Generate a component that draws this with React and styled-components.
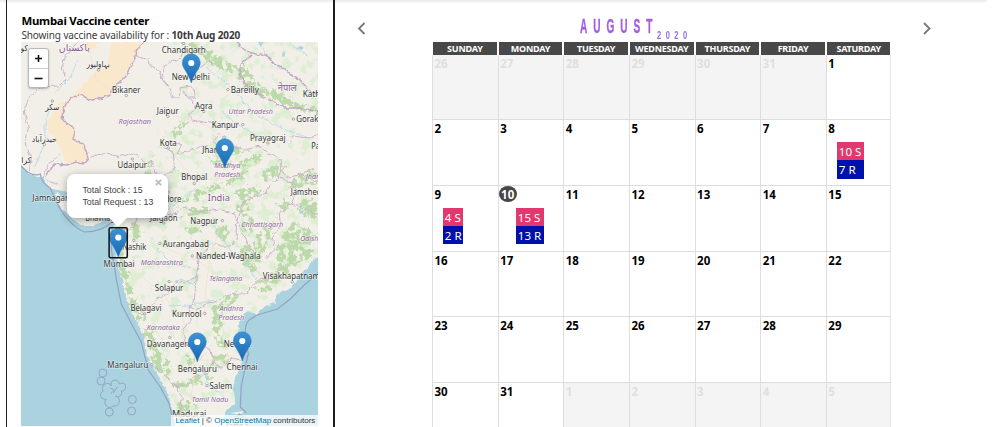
import React from "react";
import styled, { createGlobalStyle } from "styled-components";

const GlobalStyle = createGlobalStyle`
  * { box-sizing: border-box; }
  body { margin: 0; background: #fff; overflow: hidden; font-family: "Noto Sans", "Open Sans", sans-serif; }
`;

const Page = styled.div`
  width: 992px;
  height: 427px;
  overflow: hidden;
  display: flex;
  flex-direction: column;
`;
const TopEdge = styled.div`
  flex: none;
  height: 3px;
  width: 987px;
  background: linear-gradient(#ebebeb, #f3f3f3 50%, #fcfcfc);
  margin-bottom: -3px;
`;
const Columns = styled.div`
  flex: 1;
  min-height: 0;
  display: flex;
`;
const CenterPanel = styled.section`
  flex: none;
  width: 329px;
  margin-left: 6px;
  padding: 14px 0 0 14.4px;
  border-left: 1px solid #222;
  border-right: 2px solid #1c1c1c;
`;
const CenterTitle = styled.h1`
  margin: 0;
  font-size: 11.4px;
  line-height: 14px;
  font-weight: 700;
  letter-spacing: -0.25px;
  color: #000;
  white-space: nowrap;
`;
const Availability = styled.p`
  margin: 0;
  font-size: 10px;
  line-height: 14px;
  letter-spacing: -0.11px;
  color: #3a3a3a;
  white-space: nowrap;
`;
const MapFrame = styled.div`
  position: relative;
  width: 297px;
  height: 384px;
  overflow: hidden;
`;
const MapDrawing = styled.svg`
  display: block;
`;
const ZoomControl = styled.div`
  position: absolute;
  left: 7px;
  top: 6px;
  width: 21px;
  height: 40px;
  border: 1px solid #bab8b4;
  border-radius: 3px;
  background: #fff;
  display: grid;
  grid-template-rows: 1fr 1fr;
  box-shadow: 0 1px 2px rgba(0, 0, 0, 0.25);
`;
const ZoomButton = styled.button`
  border: 0;
  border-top: ${(p) => (p.$divided ? "1px solid #ccc" : "0")};
  padding: 0;
  background: none;
  display: grid;
  place-items: center;
`;
const Popup = styled.div`
  position: absolute;
  left: 46px;
  top: 132px;
  width: 101px;
  height: 44px;
  padding: 10px 0 0 15px;
  border-radius: 8px;
  background: #fff;
  box-shadow: 0 2px 8px rgba(0, 0, 0, 0.35);
  font: 8.8px/12px "Liberation Sans", sans-serif;
  color: #444;
  white-space: nowrap;
`;
const PopupTip = styled.svg`
  position: absolute;
  left: 41px;
  top: 43px;
`;
const PopupClose = styled.svg`
  position: absolute;
  right: 6px;
  top: 5px;
`;
const Attribution = styled.div`
  position: absolute;
  right: 0;
  bottom: 0;
  height: 11px;
  padding: 0 3px 0 4px;
  background: rgba(255, 255, 255, 0.75);
  font: 8.05px/11px "Liberation Sans", sans-serif;
  color: #333;
  white-space: nowrap;
  a { color: #0078a8; }
`;

const CalendarPanel = styled.main`
  flex: 1;
  display: flex;
  flex-direction: column;
`;
const MonthBar = styled.header`
  height: 42px;
  flex: none;
  display: flex;
  justify-content: space-between;
  padding: 21px 59px 0 21px;
`;
const ArrowIcon = styled.svg`
  flex: none;
`;
const MonthHeading = styled.h2`
  margin: -7px 0 0 1px;
  display: flex;
  width: 130px;
  height: 26px;
  font-family: "Liberation Sans", sans-serif;
  font-weight: 700;
`;
const MonthName = styled.span`
  width: 77px;
  font-size: 21px;
  line-height: 24px;
  letter-spacing: 12.4px;
  color: #a35de4;
  -webkit-text-stroke: 0.4px #a35de4;
  transform: scaleX(0.48);
  transform-origin: left center;
`;
const YearName = styled.span`
  font-size: 11px;
  line-height: 12px;
  margin-top: 15px;
  letter-spacing: 6.6px;
  color: #8f70dd;
  transform: scaleX(0.68);
  transform-origin: left center;
`;
const Grid = styled.div`
  flex: none;
  width: 460px;
  margin-left: 97px;
  display: grid;
  grid-template-columns: repeat(7, 65.65px);
  grid-template-rows: 12.6px repeat(6, 65.7px);
`;
const Weekday = styled.div`
  margin: 0 1px 0 1px;
  background: #484848;
  color: #fff;
  font-size: 9px;
  line-height: 13px;
  letter-spacing: -0.22px;
  font-weight: 700;
  text-align: center;
  white-space: nowrap;
`;
const Day = styled.div`
  border-left: 1.5px solid #dedee2;
  border-bottom: 1.5px solid #dcdce1;
  border-right: ${(p) => (p.$last ? "1px solid #e6e6e8" : "0")};
  background: ${(p) => (p.$outside ? "#f4f4f4" : "#fff")};
  color: ${(p) => (p.$outside ? "#dfdfdf" : "#000")};
`;
const DayNumber = styled.div`
  width: 18px;
  height: 16px;
  padding-left: ${(p) => (p.$today ? "0" : "1.5px")};
  border-radius: 50%;
  background: ${(p) => (p.$today ? "#464646" : "transparent")};
  color: ${(p) => (p.$today ? "#fff" : "inherit")};
  text-align: ${(p) => (p.$today ? "center" : "left")};
  font-size: 11.5px;
  line-height: 17px;
  font-weight: 700;
`;
const Chips = styled.div`
  width: fit-content;
  margin: 6px 0 0 ${(p) => (p.$indent ? "17px" : "10px")};
`;
const Chip = styled.div`
  height: 18.2px;
  padding: 0 ${(p) => p.$pad}px;
  font-size: 11.6px;
  line-height: 19.5px;
  color: #fff;
  white-space: nowrap;
  background: ${(p) => (p.$kind === "stock" ? "#e0396f" : "#0010aa")};
`;

/* [text, centre x, baseline, width, kind] */
const CITY = "city", REGION = "region", NATION = "nation";
const LABELS = [
  ["کو", 24, 51, 7, CITY], ["پاکستان", 74, 51, 31, NATION], ["بہاولپور", 98, 67, 23, CITY],
  ["سکر", 52, 110, 14, CITY], ["حیدرآباد", 44, 142, 25, CITY], ["کرا", 26, 163, 10, CITY],
  ["नेपाल", 287, 91, 19, NATION],
  ["Chandigarh", 183.5, 52.5, 44, CITY], ["New Delhi", 190.5, 80, 38, CITY],
  ["Bikaner", 126, 92.5, 28.5, CITY], ["Bareilly", 244.5, 92.5, 28, CITY],
  ["Kathm", 315, 96.5, 25, CITY], ["Jaipur", 167.5, 113.5, 22, CITY],
  ["Agra", 203.5, 108.5, 17.5, CITY], ["Uttar Pradesh", 250.5, 114, 44.5, REGION],
  ["Rajasthan", 134.5, 124, 32.5, REGION], ["Kanpur", 225, 127.5, 27, CITY],
  ["Gorakhpur", 316, 122, 40, CITY], ["Prayagraj", 267.5, 140.5, 35.5, CITY],
  ["Kota", 168, 145.5, 17, CITY], ["Jhansi", 213, 153, 22, CITY],
  ["Udaipur", 132, 168, 29.5, CITY], ["Patna", 321, 149, 20, CITY],
  ["Madhya", 227, 168, 26, REGION], ["Pradesh", 227, 177, 26, REGION],
  ["Bhopal", 194, 180, 26, CITY], ["Jharkhand", 322, 179, 33, REGION],
  ["Jamshedpur", 312, 195, 43, CITY], ["India", 218.5, 201, 22, NATION],
  ["Indore", 169, 201.5, 24, CITY], ["Jamnagar", 50, 201, 36, CITY],
  ["Bhavnagar", 103, 221, 36, CITY], ["Jalgaon", 163.5, 221, 27.5, CITY],
  ["Nagpur", 204, 224, 28, CITY], ["Chhattisgarh", 262, 227, 42, REGION],
  ["Odisha", 311, 241, 22, REGION], ["Nashik", 134, 250, 24, CITY],
  ["Aurangabad", 185.5, 247, 46, CITY], ["Nanded-Waghala", 228, 259, 64.5, CITY],
  ["Mumbai", 118.8, 266.5, 31, CITY], ["Maharashtra", 161.5, 264.5, 42, REGION],
  ["Telangana", 225.5, 281, 33, REGION], ["Visakhapatnam", 291, 278.5, 57, CITY],
  ["Solapur", 168.8, 291, 28.5, CITY], ["Belagavi", 145.6, 310.5, 31, CITY],
  ["Kurnool", 186.5, 316.5, 29.5, CITY], ["Andhra", 231, 311, 23.5, REGION],
  ["Pradesh", 231, 320, 26, REGION], ["Karnataka", 163, 330, 33, REGION],
  ["Davanagere", 169, 346.5, 45, CITY], ["Nellore", 237, 346.5, 27, CITY],
  ["Mangaluru", 127.5, 367.5, 41, CITY], ["Bengaluru", 197, 372, 39, CITY],
  ["Chennai", 241.8, 370, 31, CITY], ["Salem", 220.5, 388.5, 22.5, CITY],
  ["Tamil Nadu", 209.8, 402, 36.5, REGION], ["Madurai", 189, 417, 34, CITY],
  ["Jaffna", 237, 429, 22, CITY],
];
const LABEL_STYLE = {
  city: { size: 8.4, fill: "#333", slant: "normal", weight: 400 },
  region: { size: 7.8, fill: "#8f669a", slant: "italic", weight: 400 },
  nation: { size: 9.6, fill: "#85598f", slant: "normal", weight: 400 },
};
const TOWNS = [
  [183.5, 43.5], [126, 95.5], [227.5, 89.5], [167.5, 116.5], [203.5, 111.5], [242.5, 124.5],
  [293, 119], [168, 148], [132, 159], [194, 183.5], [168, 192], [222, 220.5], [133.5, 240.5],
  [159.5, 243.5], [192, 256], [163.5, 223], [52, 101], [44, 144.5], [98, 70], [168.7, 281.5],
  [144.5, 314], [204.5, 313.5], [169.5, 337.5], [151.7, 364.7], [206.5, 385.5], [292, 282], [267.5, 143],
];
const PINS = [[191, 83], [224.5, 168], [118, 257.5], [197, 362], [242, 361]];

const WOODS = [
  "M178 42 L196 50 L215 62 L235 73 L247 90 L268 98 L285 106 L300 110 L318 116 L318 108 L296 101 L276 90 L262 88 L250 75 L240 68 L222 59 L205 48 L192 42Z",
  "M188 44 L200 56 L214 66 L228 72 L236 76 L226 66 L212 60Z",
  "M192 120 L182 128 L174 138 L170 132 L180 124Z",
  "M242 62 L260 88 L240 80Z",
  "M143 180 L149 176 L152 164 L156 156 L151 158 L146 168Z",
  "M176 206 L190 194 L212 186 L226 180 L240 172 L250 168 L244 176 L230 184 L214 192 L196 200Z",
  "M178 218 L192 208 L214 208 L206 214 L190 216Z",
  "M236 164 L252 154 L264 156 L256 164 L244 170Z",
  "M208 160 L220 150 L234 146 L250 150 L234 154 L216 164Z",
  "M233 192 L248 186 L262 192 L254 200 L240 200Z",
  "M262 172 L280 160 L286 168 L276 178 L266 182Z",
  "M286 188 L296 176 L306 170 L318 174 L318 184 L300 188Z",
  "M276 206 L284 198 L290 204 L284 212Z",
  "M234 206 L246 200 L250 210 L238 216Z",
  "M242 214 L254 218 L250 234 L240 232Z",
  "M256 240 L262 226 L272 222 L270 242 L260 256Z",
  "M240 248 L252 242 L262 258 L254 274 L244 266Z",
  "M276 246 L284 232 L294 222 L304 228 L316 234 L308 244 L314 254 L300 264 L286 272 L276 262Z",
  "M252 288 L266 276 L282 264 L296 262 L288 276 L274 286 L262 292Z",
  "M294 206 L304 196 L318 202 L318 216 L304 220Z",
  "M115 238 L121 238 L125 262 L131 284 L138 304 L146 318 L140 324 L131 312 L125 292 L120 272Z",
  "M141 330 L150 328 L158 350 L166 356 L171 366 L168 376 L156 372 L150 352Z",
  "M164 374 L178 382 L192 380 L202 372 L202 381 L188 388 L176 388Z",
  "M176 404 L188 400 L198 406 L190 412 L182 428 L177 416Z",
  "M212 306 L222 302 L232 294 L240 288 L233 304 L222 312 L220 334 L226 346 L219 348 L213 332Z",
  "M185 356 L192 354 L196 364 L188 366Z",
  "M210 356 L226 352 L230 362 L216 368Z",
  "M70 212 L78 205 L88 209 L80 216Z",
  "M136 220 L142 232 L134 242 L129 230Z",
  "M203 370 L213 380 L204 384Z",
  "M184 230 L196 226 L204 230 L190 234Z",
  "M212 232 L224 224 L230 233 L220 240Z",
];
const BORDERS = [
  "M143 42 L141 46 L136 50 L136 56 L130 66 L126 75 L121 80 L113 89 L110 95 L99 99 L90 100 L83 96 L78 95 L72 97 L66 103 L62 113 L62 118 L66 123 L73 127 L74 140 L83 143 L85 150 L88 158 L84 163 L76 162 L66 165 L54 164 L46 176",
];
const STATE_LINES = [
  "M77 42 L73 47 L65 55 L62 68 L66 80 L58 86 L40 87 L28 98 L24 112 L28 128 L25 144 L31 158 L28 174",
  "M136 57 L148 59 L150 66 L158 70 L163 81 L170 89 L171 97 L179 97 L180 88 L190 86 L194 90 L195 98 L187 98 L184 92",
  "M184 44 L181 57 L176 61 L172 60 L164 66 L161 80",
  "M190 98 L195 108 L188 114 L192 120 L209 123 L220 128",
  "M186 50 L192 57 L196 62 L194 72 L207 62 L213 64",
  "M218 133 L214 142 L219 148 L233 146 L245 150 L259 146 L268 154 L275 156 L280 160 L280 170 L288 178 L300 174 L314 168",
  "M174 170 L173 152 L164 148 L167 142 L180 144 L178 154 L190 151 L200 146 L207 146",
  "M174 170 L163 176 L155 174 L151 160 L146 165 L141 158 L132 153 L118 157 L107 153 L91 156",
  "M147 180 L144 188 L148 198 L146 207 L139 214 L134 225 L128 230 L122 229",
  "M147 207 L160 208 L172 216 L185 206 L193 212 L205 211 L219 209 L231 213 L236 211",
  "M281 169 L278 178 L270 185 L266 193 L250 199 L242 202 L239 216 L236 225 L236 239 L231 246",
  "M280 178 L294 184 L296 192 L290 204 L279 212 L280 226 L272 236 L274 250 L265 259",
  "M231 246 L222 246 L212 243 L199 258 L196 277 L185 283 L175 281 L173 290 L156 300 L145 313 L136 314",
  "M196 277 L194 300 L188 310 L191 320 L182 330 L186 346 L196 343 L210 350 L214 362",
  "M190 306 L197 310 L207 303 L214 302 L232 294 L245 294 L258 280 L272 278 L286 264",
  "M214 362 L206 374 L193 377 L185 386 L176 386 L165 376 L153 366",
  "M176 386 L182 398 L180 412 L184 426",
  "M214 362 L220 369 L232 358 L242 361",
  "M233 212 L242 232 L248 244 L254 256",
  "M290 144 L292 136 L308 138 L318 134",
  "M300 174 L318 182 M290 204 L305 208 L318 216",
  "M60 154 L48 164 L44 174 L49 182 L59 185",
];
const ROADS = "M87 42 L96 80 L118 95 M170 114 L205 125 L240 150 L270 145 M168 148 L194 180 L230 178 L262 160 M157 243 L170 250 L200 262 L225 285 M121 258 L140 275 L160 292 L182 318 L197 360 L240 360 M197 360 L190 400 M222 220 L210 255 L206 285 L204 313 M244 250 L266 285";
const WATER = "M180 62 L186 58 M202 64 L215 75 L234 89 L248 108 L262 118 L284 129 L310 139 M222 112 L240 126 L260 138 M196 188 L174 205 L148 220 M120 198 L140 190 M168 284 L181 279 L195 286 M210 220 L220 235 L230 250 L246 264 L258 282 M168 306 L190 305 L214 300 M156 247 L172 264 L190 268 M54 93 L70 78 L78 58 M52 101 L45 122 L44 145 L34 168 M202 366 L210 388 L224 395 M290 44 L307 55 M262 48 L270 60 L280 69";

function IndiaMap() {
  return (
    <MapDrawing width="297" height="384" viewBox="20.7 42 297 384" aria-label="Map of India">
      <defs>
        <filter id="rough" x="-5%" y="-5%" width="110%" height="110%">
          <feTurbulence type="fractalNoise" baseFrequency="0.18" numOctaves="3" seed="4" result="noise" />
          <feDisplacementMap in="SourceGraphic" in2="noise" scale="10" xChannelSelector="R" yChannelSelector="G" result="shape" />
          <feColorMatrix in="noise" values="0 0 0 0 0  0 0 0 0 0  0 0 0 0 0  0 0 9 0 -3.6" result="holes" />
          <feComposite in="shape" in2="holes" operator="in" />
        </filter>
        <filter id="edge" x="-5%" y="-5%" width="110%" height="110%">
          <feTurbulence type="fractalNoise" baseFrequency="0.2" numOctaves="2" seed="9" result="noise" />
          <feDisplacementMap in="SourceGraphic" in2="noise" scale="4.5" xChannelSelector="R" yChannelSelector="G" />
        </filter>
        <filter id="speckle" x="0" y="0" width="100%" height="100%">
          <feTurbulence type="fractalNoise" baseFrequency="0.1" numOctaves="4" seed="12" />
          <feColorMatrix values="0 0 0 0 0.72  0 0 0 0 0.85  0 0 0 0 0.65  8 0 0 0 -4.3" />
          <feComposite in2="SourceGraphic" operator="in" />
        </filter>
        <linearGradient id="pinFill" x1="0" y1="0" x2="0" y2="1">
          <stop offset="0" stopColor="#3d93d3" />
          <stop offset="1" stopColor="#1767b4" />
        </linearGradient>
      </defs>
      <rect x="20" y="42" width="299" height="384" fill="#f2efe9" />
      <g fill="#f9e8cb" filter="url(#edge)">
        <path d="M112 42 L143 42 L141 48 L136 57 L128 69 L121 80 L110 95 L99 99 L90 100 L83 97 L72 96 L84 84 L94 74 L106 66 L109 54Z" />
        <path d="M84 42 L99 42 L95 48 L86 51Z" />
        <path d="M68 99 L77 95 L70 101 L63 113 L64 120 L74 128 L75 140 L85 146 L88 158 L80 163 L66 164 L62 152 L54 138 L45 126 L50 116 L58 104Z" />
      </g>
      <path d="M172 42 H318 V256 L255 312 L238 324 V365 L232 405 L180 420 L142 330 L122 265 L116 225 L150 190 L142 160 L158 130 L185 110Z" fill="#000" filter="url(#speckle)" />
      <g fill="#bcdaa9" filter="url(#rough)">{WOODS.map((d) => <path key={d} d={d} />)}</g>
      <g fill="none" stroke="#f3dfcf" strokeWidth=".8"><path d={ROADS} /></g>
      <g fill="none" stroke="#b5d9e6" strokeWidth=".9" filter="url(#edge)"><path d={WATER} /></g>
      <g fill="#aad3df" filter="url(#edge)">
        <path d="M10 158 L23 168 L29 174 L37 177 L43 177 L45 184 L52 189 L64 191 L76 190 L78 193 L66 196 L55 194 L54 197 L60 207 L72 219 L82 226 L92 226 L101 222 L106 214 L105 204 L109 205 L111 216 L115 225 L112 234 L116 252 L118 265 L121 278 L125 292 L129 307 L136 321 L143 337 L147 354 L153 368 L161 381 L168 394 L172 410 L176 436 H0Z" />
        <path d="M330 246 L318 255 L310 264 L300 276 L289 289 L276 295 L274 303 L263 307 L256 314 L246 311 L239 321 L238 335 L240 347 L243 355 L241 366 L235 377 L233 386 L235 404 L226 410 L225 414 L214 436 H330Z" />
        <path d="M221 138 L226 136 L226 142 L222 142Z M137 196 L139 190 L141 196Z M295 47 L302 46 L302 50Z M256 43 L262 42 L261 46Z M282 52 L286 56 L282 57Z M298 212 L304 210 L302 214Z" />
      </g>
      <path d="M216 432 L222 421 L236 417 L248 426Z M230 413 L244 411 L240 415Z" fill="#f2efe9" />
      <g fill="none" filter="url(#edge)">
        <g stroke="#c1a6c6" strokeWidth="1.4">{BORDERS.map((d) => <path key={d} d={d} />)}
          <path d="M237 42 L244 50 L258 55 L266 55 L274 64 L284 68 L291 76 L300 80 L309 91 L318 94" />
          <path d="M251 55 L241 64 L239 74 L247 87 L265 98 L284 108 L301 108 L318 112" />
        </g>
        <g stroke="#cab4ce" strokeWidth="1">{STATE_LINES.map((d) => <path key={d} d={d} />)}</g>
      </g>
      <g fill="none" stroke="#94a2c3" strokeWidth="1.2">
        <path d="M20 165 Q31 178 40 174 Q41 183 50 188 L56 202 Q68 225 84 232 Q101 232 112 222" />
        <path d="M112 229 Q109 245 114 266 L116 279 L121 304 L135 331 L141 342 L148 370 L160 387 L169 404 L174 426" />
        <path d="M319 272 L303 286 L290 299 L277 309 L257 315 L249 320 Q244 324 245 337 L248 354 L245 367 L241 386 L240 407 L246 413 M226 426 L239 414 L249 421" />
        <g stroke="#949fc0" strokeWidth=".9">
          <circle cx="102.5" cy="373" r="4" /><circle cx="100.8" cy="381" r="4" />
          <circle cx="132" cy="399.5" r="4" /><circle cx="131.3" cy="411" r="4" /><circle cx="109" cy="412" r="4" />
          <path d="M104 385 A4 4 0 0 1 111 386 A4.2 4.2 0 1 1 119 384 A4 4 0 1 1 121 391 A4 4 0 0 1 115 396 A4 4 0 1 1 113 406 A4 4 0 0 1 106 399 A4 4 0 0 1 103 391 A4 4 0 0 1 104 385 M110 388 L114 390 L110 394 M117 387 L113 393" />
        </g>
      </g>
      <g fill="#f6f4f1" stroke="#8b8b8b" strokeWidth=".7">
        {TOWNS.map(([x, y]) => <circle key={`${x}-${y}`} cx={x} cy={y} r="1.2" />)}
      </g>
      <g textAnchor="middle" fontFamily='"Noto Sans", "DejaVu Sans", sans-serif' stroke="#fff" strokeOpacity=".6" strokeWidth="1.2" paintOrder="stroke">
        {LABELS.map(([text, x, y, width, kind]) => {
          const s = LABEL_STYLE[kind];
          return (
            <text key={`${text}-${x}-${y}`} x={x} y={y} textLength={width} lengthAdjust="spacingAndGlyphs" fontSize={s.size} fontStyle={s.slant} fontWeight={s.weight} fill={s.fill}>
              {text}
            </text>
          );
        })}
      </g>
      {PINS.map(([x, y]) => (
        <g key={`${x}-${y}`} transform={`translate(${x} ${y})`}>
          <path d="M0 0 L9 -10 L4 -3Z" fill="#000" opacity=".1" />
          <path d="M0 0 C-1.4 -5 -4 -9.5 -7 -14.2 Q-9 -17 -9 -20.2 A9 9 0 0 1 9 -20.2 Q9 -17 7 -14.2 C4 -9.5 1.4 -5 0 0Z" fill="url(#pinFill)" stroke="#2d7dbd" strokeWidth=".5" />
          <circle cy="-20" r="3.1" fill="#fff" />
        </g>
      ))}
      <rect x="108.8" y="227.7" width="18.2" height="30" rx="1.5" fill="none" stroke="#111" strokeWidth="1.5" />
    </MapDrawing>
  );
}

const WEEKDAYS = ["SUNDAY", "MONDAY", "TUESDAY", "WEDNESDAY", "THURSDAY", "FRIDAY", "SATURDAY"];
const DAYS = Array.from({ length: 42 }, (_, i) => {
  const n = i - 5;
  if (n < 1) return { n: n + 31, outside: true };
  if (n > 31) return { n: n - 31, outside: true };
  return { n, outside: false };
});
const BOOKINGS = { 8: [10, 7, 2], 9: [4, 2, 1.8], 10: [15, 13, 2.2] };
const TODAY = 10;

function Chevron({ next }) {
  return (
    <ArrowIcon width="12" height="16" viewBox="0 0 12 16" fill="none" stroke="#777" strokeWidth="1.8">
      <path d={next ? "M3 2 L8.5 7.5 L3 13" : "M8.5 2 L3 7.5 L8.5 13"} />
    </ArrowIcon>
  );
}

export default function App() {
  return (
    <Page>
      <GlobalStyle />
      <TopEdge />
      <Columns>
        <CenterPanel>
          <CenterTitle>Mumbai Vaccine center</CenterTitle>
          <Availability>Showing vaccine availability for : <b>10th Aug 2020</b></Availability>
          <MapFrame>
            <IndiaMap />
            <ZoomControl>
              <ZoomButton aria-label="Zoom in">
                <svg width="9" height="9" viewBox="0 0 9 9" stroke="#111" strokeWidth="1.6"><path d="M1 4.5H8M4.5 1V8" /></svg>
              </ZoomButton>
              <ZoomButton $divided aria-label="Zoom out">
                <svg width="9" height="9" viewBox="0 0 9 9" stroke="#111" strokeWidth="1.6"><path d="M.5 4.5H8.5" /></svg>
              </ZoomButton>
            </ZoomControl>
            <Popup>
              <div>Total Stock : 15</div>
              <div>Total Request : 13</div>
              <PopupClose width="7" height="7" viewBox="0 0 7 7" stroke="#bcbcbc" strokeWidth="1.7"><path d="M.8 .8L6.2 6.2M6.2 .8L.8 6.2" /></PopupClose>
              <PopupTip width="20" height="10" viewBox="0 0 20 10"><path d="M0 0H20L10 9.5Z" fill="#fff" /></PopupTip>
            </Popup>
            <Attribution><a>Leaflet</a> | © <a>OpenStreetMap</a> contributors</Attribution>
          </MapFrame>
        </CenterPanel>
        <CalendarPanel>
          <MonthBar>
            <Chevron />
            <MonthHeading><MonthName>AUGUST</MonthName><YearName>2020</YearName></MonthHeading>
            <Chevron next />
          </MonthBar>
          <Grid>
            {WEEKDAYS.map((name) => <Weekday key={name}>{name}</Weekday>)}
            {DAYS.map((day, i) => {
              const today = !day.outside && day.n === TODAY;
              const booking = !day.outside && BOOKINGS[day.n];
              return (
                <Day key={i} $outside={day.outside} $last={i % 7 === 6}>
                  <DayNumber $today={today}>{day.n}</DayNumber>
                  {booking && (
                    <Chips $indent={today}>
                      <Chip $kind="stock" $pad={booking[2]}>{booking[0]} S</Chip>
                      <Chip $kind="request" $pad={booking[2]}>{booking[1]} R</Chip>
                    </Chips>
                  )}
                </Day>
              );
            })}
          </Grid>
        </CalendarPanel>
      </Columns>
    </Page>
  );
}
